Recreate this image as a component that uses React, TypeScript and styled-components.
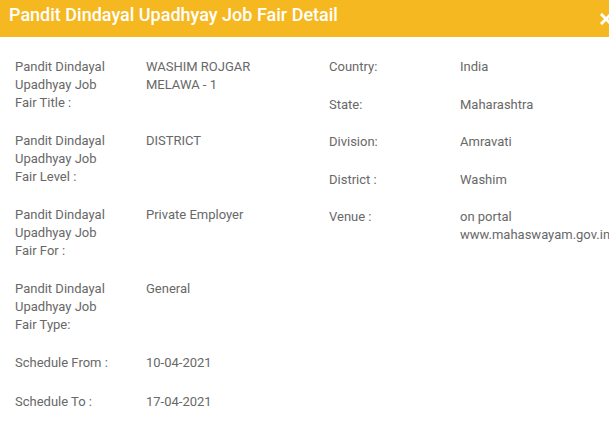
import React from "react";
import styled, { createGlobalStyle } from "styled-components";

const GlobalStyle = createGlobalStyle`
  html, body {
    margin: 0;
    padding: 0;
    background: #fff;
  }
  body {
    font-family: Roboto, "Liberation Sans", Arial, sans-serif;
    overflow: hidden;
  }
`;

const Modal = styled.div`
  width: 609px;
  height: 428px;
  background: #fff;
  overflow: hidden;
`;

const Header = styled.div`
  position: relative;
  height: 37px;
  box-sizing: border-box;
  padding: 4px 10px 0 9px;
  background: #f6b821;
  display: flex;
  align-items: flex-start;
`;

const Title = styled.h4`
  margin: 0;
  font-size: 18px;
  line-height: 21px;
  font-weight: 500;
  color: #fff;
  white-space: nowrap;
`;

const Close = styled.span`
  position: absolute;
  left: 600px;
  top: 10px;
  width: 12px;
  height: 12px;
`;

const Body = styled.div`
  display: grid;
  grid-template-columns: 314px 1fr;
  padding: 21px 0 0 15px;
`;

const Column = styled.div`
  display: flex;
  flex-direction: column;
`;

const Row = styled.div<{ $gap?: number }>`
  display: grid;
  grid-template-columns: 131px 1fr;
  margin-bottom: ${(p) => p.$gap ?? 20}px;
  font-size: 13px;
  line-height: 18px;
  color: #686868;
`;

const Label = styled.div`
  padding-right: 31px;
`;

const Value = styled.div`
  white-space: pre-line;
`;

const left = [
  { label: "Pandit Dindayal Upadhyay Job Fair Title :", value: "WASHIM ROJGAR\nMELAWA - 1" },
  { label: "Pandit Dindayal Upadhyay Job Fair Level :", value: "DISTRICT" },
  { label: "Pandit Dindayal Upadhyay Job Fair For :", value: "Private Employer" },
  { label: "Pandit Dindayal Upadhyay Job Fair Type:", value: "General" },
  { label: "Schedule From :", value: "10-04-2021" },
  { label: "Schedule To :", value: "17-04-2021" },
];

const right = [
  { label: "Country:", value: "India" },
  { label: "State:", value: "Maharashtra" },
  { label: "Division:", value: "Amravati" },
  { label: "District :", value: "Washim" },
  { label: "Venue :", value: "on portal\nwww.mahaswayam.gov.in" },
];

export default function App() {
  return (
    <>
      <GlobalStyle />
      <Modal>
        <Header>
          <Title>Pandit Dindayal Upadhyay Job Fair Detail</Title>
          <Close>
            <svg width="12" height="12" viewBox="0 0 12 12">
              <path d="M2 2 L10 10 M10 2 L2 10" stroke="#fff" strokeWidth="3" strokeLinecap="square" />
            </svg>
          </Close>
        </Header>
        <Body>
          <Column>
            {left.map((r) => (
              <Row key={r.label} $gap={r.label.startsWith("Schedule") ? 21 : 20}>
                <Label>{r.label}</Label>
                <Value>{r.value}</Value>
              </Row>
            ))}
          </Column>
          <Column>
            {right.map((r) => (
              <Row key={r.label} $gap={19.5}>
                <Label>{r.label}</Label>
                <Value>{r.value}</Value>
              </Row>
            ))}
          </Column>
        </Body>
      </Modal>
    </>
  );
}
